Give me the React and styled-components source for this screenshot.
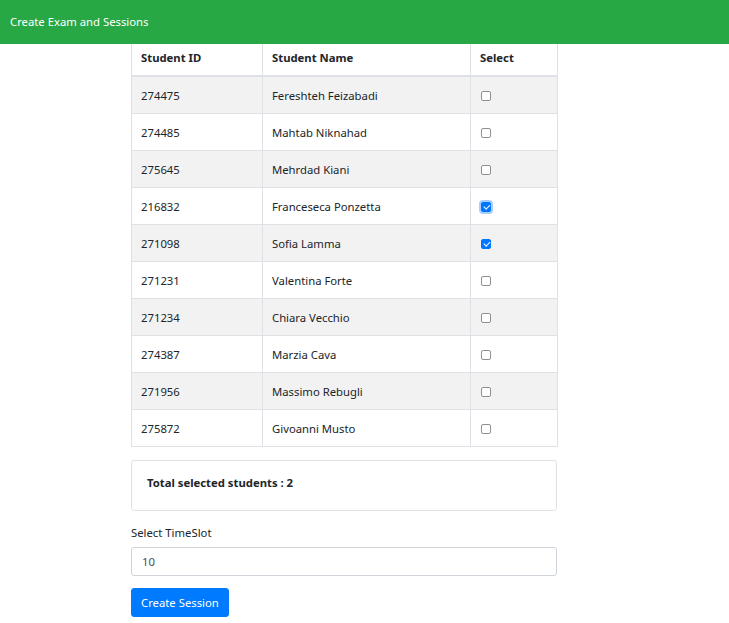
import React, { useState } from "react";
import styled, { createGlobalStyle } from "styled-components";

const Global = createGlobalStyle`
  html, body { margin: 0; padding: 0; background: #fff; }
  body {
    font-family: "Segoe UI", "Noto Sans", "Open Sans", sans-serif;
    color: #212529;
    font-size: 11.3px;
    line-height: 18px;
  }
  * { box-sizing: border-box; }
`;

const NavBar = styled.nav`
  position: fixed;
  top: 0;
  left: 0;
  right: 0;
  height: 44px;
  background: #28a745;
  display: flex;
  align-items: center;
  padding: 0 10px;
  z-index: 10;
`;

const Brand = styled.span`
  color: #fff;
  font-size: 11.3px;
`;

const Page = styled.main`
  padding-top: 37px;
  display: flex;
  justify-content: center;
`;

const Container = styled.div`
  width: 426px;
  margin-left: -41px;
  display: flex;
  flex-direction: column;
`;

const Table = styled.table`
  width: 426px;
  border-collapse: collapse;
  table-layout: fixed;
  margin-bottom: 13px;
`;

const Th = styled.th`
  text-align: left;
  font-weight: 700;
  padding: 11px 9px 8px;
  border: 1px solid #dee2e6;
  border-bottom-width: 2px;
  width: ${(p) => p.$w}px;
`;

const Row = styled.tr`
  background: ${(p) => (p.$striped ? "#f2f2f2" : "#fff")};
`;

const Td = styled.td`
  padding: 10px 9px 8px;
  border: 1px solid #dee2e6;
  height: 37px;
  vertical-align: middle;
`;

const Check = styled.input.attrs({ type: "checkbox" })`
  appearance: none;
  -webkit-appearance: none;
  display: block;
  width: 10px;
  height: 10px;
  margin: -1px 0 0 1px;
  border: 1px solid #8f8f8f;
  border-radius: 2px;
  background: #fff;
  position: relative;
  cursor: pointer;
  outline: none;
  &:checked {
    background: #0075ff;
    border-color: #0075ff;
  }
  &:checked::after {
    content: "";
    position: absolute;
    left: 2.5px;
    top: 0.5px;
    width: 2.5px;
    height: 5px;
    border: solid #fff;
    border-width: 0 1.5px 1.5px 0;
    transform: rotate(45deg);
  }
  ${(p) => p.$focus && `box-shadow: 0 0 0 2px rgba(0,117,255,0.35);`}
`;

const Card = styled.div`
  border: 1px solid #dee2e6;
  border-radius: 3px;
  padding: 13px 15px 18px;
  margin-bottom: 13px;
`;

const CardTitle = styled.div`
  font-weight: 700;
`;

const Label = styled.label`
  display: block;
  margin-bottom: 5px;
`;

const Input = styled.input`
  width: 426px;
  height: 29px;
  border: 1px solid #ced4da;
  border-radius: 3px;
  padding: 0 10px;
  font: inherit;
  color: #495057;
  margin-bottom: 12px;
  outline: none;
`;

const Button = styled.button`
  align-self: flex-start;
  background: #007bff;
  color: #fff;
  border: 1px solid #007bff;
  border-radius: 3px;
  font: inherit;
  height: 29px;
  padding: 0 9px;
  cursor: pointer;
`;

const students = [
  ["274475", "Fereshteh Feizabadi", false],
  ["274485", "Mahtab Niknahad", false],
  ["275645", "Mehrdad Kiani", false],
  ["216832", "Franceseca Ponzetta", true],
  ["271098", "Sofia Lamma", true],
  ["271231", "Valentina Forte", false],
  ["271234", "Chiara Vecchio", false],
  ["274387", "Marzia Cava", false],
  ["271956", "Massimo Rebugli", false],
  ["275872", "Givoanni Musto", false],
];

export default function App() {
  const [sel, setSel] = useState(students.map((s) => s[2]));
  const count = sel.filter(Boolean).length;
  return (
    <>
      <Global />
      <NavBar>
        <Brand>Create Exam and Sessions</Brand>
      </NavBar>
      <Page>
        <Container>
          <Table>
            <thead>
              <tr>
                <Th $w={131}>Student ID</Th>
                <Th $w={208}>Student Name</Th>
                <Th $w={87}>Select</Th>
              </tr>
            </thead>
            <tbody>
              {students.map(([id, name], i) => (
                <Row key={id} $striped={i % 2 === 0}>
                  <Td>{id}</Td>
                  <Td>{name}</Td>
                  <Td>
                    <Check
                      checked={sel[i]}
                      $focus={i === 3}
                      onChange={() =>
                        setSel(sel.map((v, j) => (j === i ? !v : v)))
                      }
                    />
                  </Td>
                </Row>
              ))}
            </tbody>
          </Table>
          <Card>
            <CardTitle>Total selected students : {count}</CardTitle>
          </Card>
          <Label>Select TimeSlot</Label>
          <Input defaultValue="10" />
          <Button>Create Session</Button>
        </Container>
      </Page>
    </>
  );
}
